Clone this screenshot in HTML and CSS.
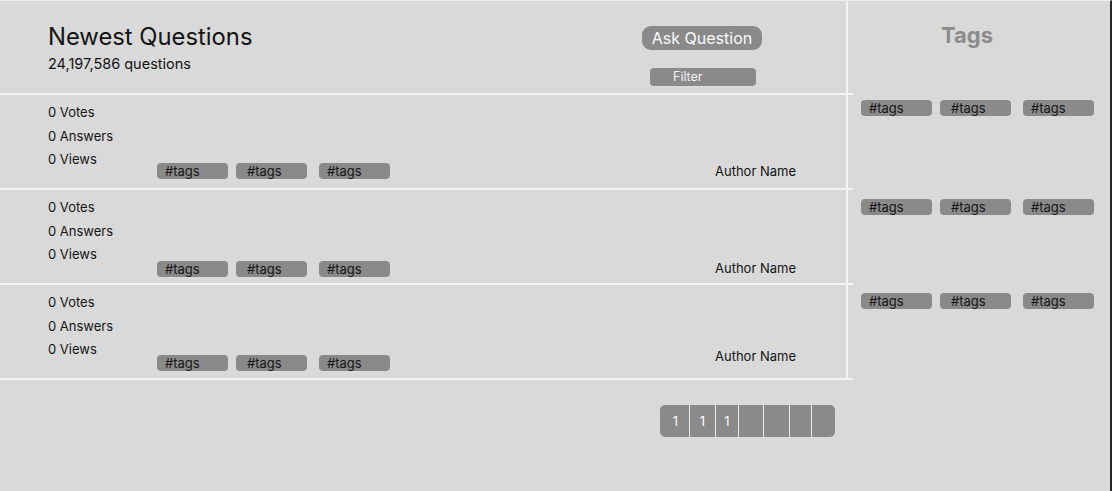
FILE: index.html
```html
<!DOCTYPE html>
<html lang="en">
<head>
<meta charset="utf-8">
<title>Newest Questions</title>
<link rel="stylesheet" href="styles.css">
</head>
<body>
<div class="page">
  <div class="main">
    <section class="list">
      <header class="head">
        <div class="head-title">
          <h1 class="title">Newest Questions</h1>
          <p class="count">24,197,586 questions</p>
        </div>
        <div class="head-actions">
          <button class="ask">Ask Question</button>
          <button class="filter">Filter</button>
        </div>
      </header>
      <article class="q">
        <div class="stats"><span>0 Votes</span><span>0 Answers</span><span>0 Views</span></div>
        <div class="tags"><span class="chip">#tags</span><span class="chip">#tags</span><span class="chip">#tags</span></div>
        <div class="author">Author Name</div>
      </article>
      <article class="q">
        <div class="stats"><span>0 Votes</span><span>0 Answers</span><span>0 Views</span></div>
        <div class="tags"><span class="chip">#tags</span><span class="chip">#tags</span><span class="chip">#tags</span></div>
        <div class="author">Author Name</div>
      </article>
      <article class="q">
        <div class="stats"><span>0 Votes</span><span>0 Answers</span><span>0 Views</span></div>
        <div class="tags"><span class="chip">#tags</span><span class="chip">#tags</span><span class="chip">#tags</span></div>
        <div class="author">Author Name</div>
      </article>
    </section>
    <nav class="pager">
      <span class="pg">1</span><span class="pg">1</span><span class="pg">1</span><span class="pg"></span><span class="pg"></span><span class="pg"></span><span class="pg"></span>
    </nav>
  </div>
  <aside class="side">
    <h2 class="side-title">Tags</h2>
    <div class="side-row"><span class="chip">#tags</span><span class="chip">#tags</span><span class="chip">#tags</span></div>
    <div class="side-row"><span class="chip">#tags</span><span class="chip">#tags</span><span class="chip">#tags</span></div>
    <div class="side-row"><span class="chip">#tags</span><span class="chip">#tags</span><span class="chip">#tags</span></div>
  </aside>
</div>
</body>
</html>
```

FILE: styles.css
```css
* { box-sizing: border-box; }

html, body {
  margin: 0;
  padding: 0;
  background: #d9d9d9;
}

body {
  font-family: Inter, "Noto Sans", "Liberation Sans", sans-serif;
  color: #141414;
}

.page {
  display: flex;
  width: 1112px;
  height: 491px;
  border-top: 1px solid #ececec;
  border-right: 2px solid #262626;
}

.main {
  width: 848px;
  flex: none;
  display: flex;
  flex-direction: column;
}

.list {
  border-right: 2px solid #f4f4f4;
}

.head {
  height: 94px;
  display: flex;
  justify-content: space-between;
  padding: 0 83px 0 48px;
  border-bottom: 2px solid #f4f4f4;
  margin-right: -7px;
}

.head-title {
  padding-top: 22px;
}

.title {
  margin: 0;
  font-size: 23.8px;
  line-height: 28px;
  font-weight: 400;
}

.count {
  margin: 4px 0 0;
  font-size: 14.5px;
  line-height: 18px;
}

.head-actions {
  padding-top: 25px;
  display: flex;
  flex-direction: column;
  align-items: center;
  width: 120px;
  margin-right: 7px;
}

.ask {
  width: 120px;
  height: 24px;
  margin-right: 2px;
  border: 0;
  border-radius: 9px;
  background: #8a8a8a;
  color: #fafafa;
  font-family: inherit;
  font-size: 16px;
  line-height: 25px;
  padding: 0;
}

.filter {
  margin-top: 18px;
  width: 106px;
  height: 18px;
  border: 0;
  border-radius: 4px;
  background: #8a8a8a;
  color: #f2f2f2;
  font-family: inherit;
  font-size: 12.5px;
  line-height: 18px;
  padding: 0 0 0 23px;
  text-align: left;
}

.q {
  height: 95px;
  display: flex;
  padding: 6px 0 0 48px;
  border-bottom: 2px solid #f4f4f4;
  margin-right: -7px;
}

.stats {
  width: 109px;
  flex: none;
  display: flex;
  flex-direction: column;
  font-size: 13px;
  line-height: 23.5px;
}

.tags {
  flex: 1;
  display: flex;
  padding-top: 62px;
}

.q:nth-of-type(2) .tags { padding-top: 65px; }
.q:nth-of-type(3) .tags { padding-top: 64px; }

.chip {
  display: block;
  width: 71px;
  height: 16px;
  border-radius: 4px;
  background: #8a8a8a;
  color: #161616;
  font-size: 13px;
  line-height: 17px;
  padding-left: 8px;
  margin-right: 8px;
}

.chip:nth-child(2) {
  padding-left: 11px;
  margin-right: 12px;
}

.author {
  width: 138px;
  flex: none;
  padding-top: 61px;
  font-size: 13px;
  line-height: 18px;
}

.q:nth-of-type(2) .author { padding-top: 63px; }
.q:nth-of-type(3) .author { padding-top: 56px; }

.pager {
  display: flex;
  align-self: flex-start;
  margin: 25px 0 0 660px;
  height: 32px;
  border-radius: 5px;
  overflow: hidden;
  background: #8a8a8a;
}

.pg {
  display: block;
  height: 32px;
  color: #fafafa;
  font-size: 13px;
  line-height: 32px;
  text-align: center;
  border-left: 1px solid #ececec;
}

.pg:first-child { border-left: 0; width: 29px; padding-left: 2px; }
.pg:nth-child(2) { width: 26px; }
.pg:nth-child(3) { width: 23px; }
.pg:nth-child(4) { width: 25px; }
.pg:nth-child(5) { width: 26px; }
.pg:nth-child(6) { width: 22px; }
.pg:nth-child(7) { width: 24px; }

.side {
  flex: 1;
  display: flex;
  flex-direction: column;
}

.side-title {
  margin: 0;
  height: 94px;
  padding: 20px 24px 0 0;
  text-align: center;
  font-size: 22px;
  line-height: 28px;
  font-weight: 700;
  color: #8c8c8c;
}

.side-row {
  height: 95px;
  display: flex;
  padding: 5px 0 0 13px;
}

.side-row:nth-of-type(2) { padding-top: 9px; }
.side-row:nth-of-type(3) { padding-top: 8px; }
```
